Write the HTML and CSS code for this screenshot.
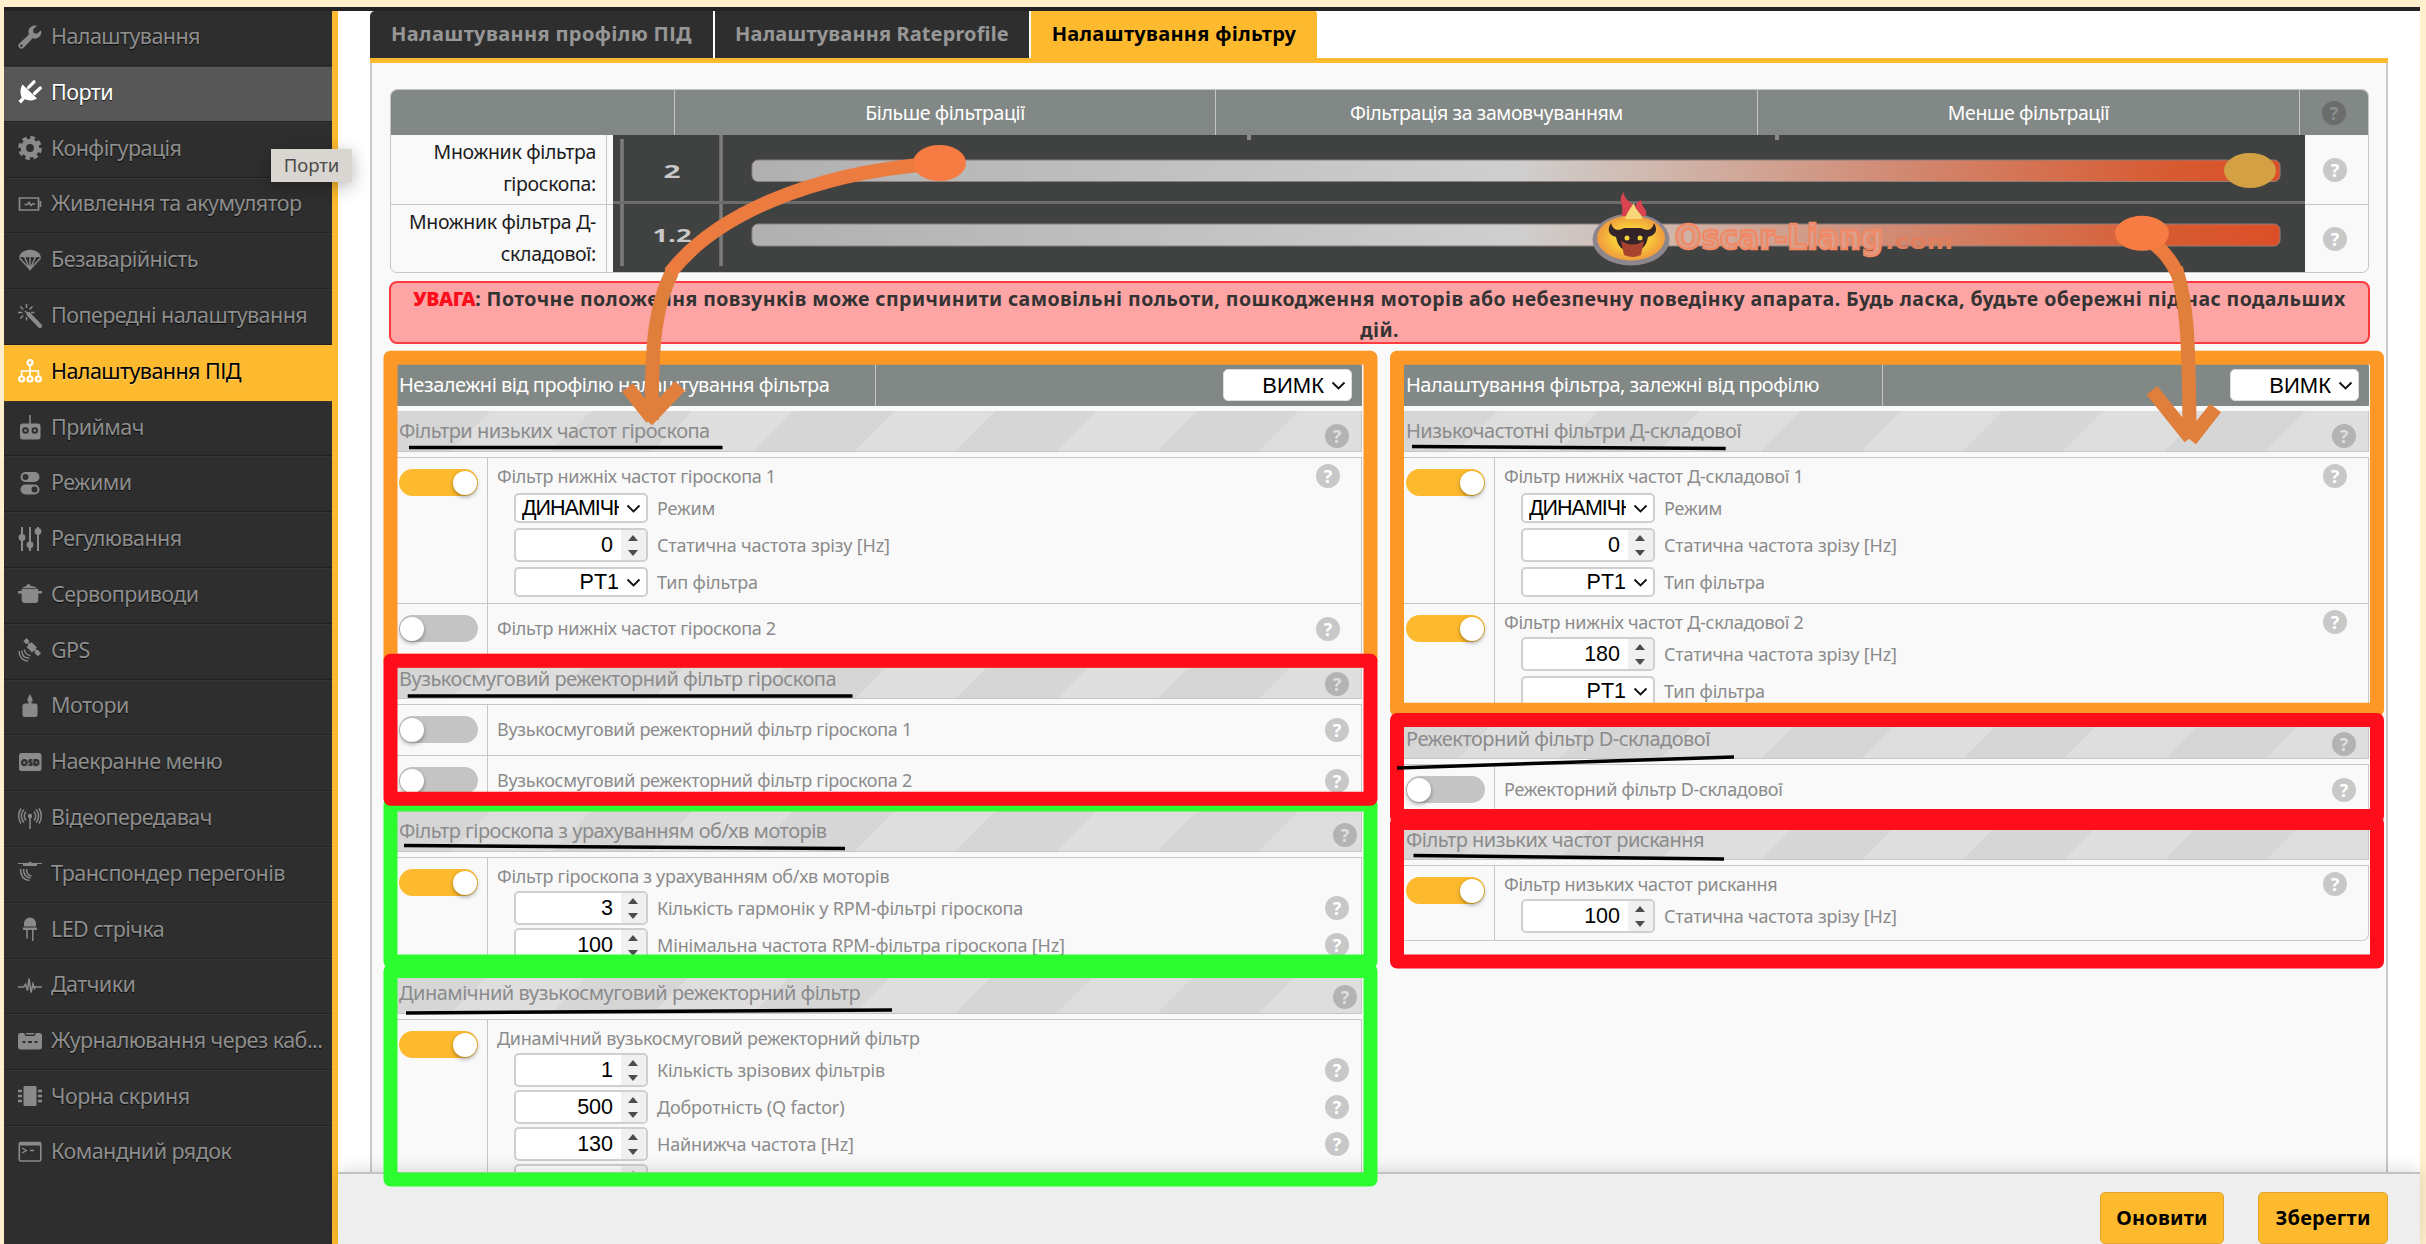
FILE: index.html
```html
<!DOCTYPE html>
<html lang="uk">
<head>
<meta charset="utf-8">
<title>Налаштування фільтру</title>
<link rel="stylesheet" href="styles.css">
</head>
<body>
<div class="window">
  <nav class="sidebar">
    <a class="item"><svg viewBox="0 0 24 24"><path d="M23 5.200l-4 3.600-3.400-.800L15 4.600l4-3.800a6.500 6.500 0 0 0-8 8.700L1.300 18.500a3 3 0 1 0 4.300 4.200l9-9.500a6.500 6.500 0 0 0 8.400-8zM3.400 21.900a1.200 1.200 0 1 1 0-2.400 1.200 1.200 0 0 1 0 2.400z" fill-rule="evenodd"/></svg><span>Налаштування</span></a>
    <a class="item hover"><svg viewBox="0 0 24 24"><path d="M4.500 4.500l14.500 14c-4 2.400-8.500 2.600-12 .5L3 23.500 .5 21l3.300-3.500C2 13.500 2 8.500 4.500 4.500z"/><path d="M10.500 7.500L16 1.800M16.500 13.500L22.300 8" fill="none" stroke="currentColor" stroke-width="3.200" stroke-linecap="round"/></svg><span>Порти</span></a>
    <a class="item"><svg viewBox="0 0 24 24"><circle cx="12" cy="12" r="6.600" fill="none" stroke="currentColor" stroke-width="5.400"/><circle cx="12" cy="12" r="9.900" fill="none" stroke="currentColor" stroke-width="4" stroke-dasharray="4.400 3.375"/></svg><span>Конфігурація</span></a>
    <a class="item"><svg viewBox="0 0 24 24"><path d="M1.500 6h19v12h-19zM22.500 9v6M6.500 12.500h3l1.500-2 2 3 1.500-1.500h2.500" fill="none" stroke="currentColor" stroke-width="1.700"/></svg><span>Живлення та акумулятор</span></a>
    <a class="item"><svg viewBox="0 0 24 24"><path d="M1 10C2 -1 22 -1 23 10c-2-1.500-4-1.500-5.500 0-2-1.500-9-1.500-11 0C5 8.500 3 8.500 1 10z"/><path d="M1.500 10L12 21.500 22.500 10M7 10l5 11.500L17 10M12 9v12" fill="none" stroke="currentColor" stroke-width="1.400"/></svg><span>Безаварійність</span></a>
    <a class="item"><svg viewBox="0 0 24 24"><path d="M10.500 10L22 22" fill="none" stroke="currentColor" stroke-width="4.200" stroke-linecap="round"/><path d="M7 7l2 2M8.500 0v4M0 8.500h4.500M2.300 2.500l3 3M14.500 2.500l-3 3M2.300 14.500l3-3M8.500 13v3.500M13 8.500h3.500" fill="none" stroke="currentColor" stroke-width="1.500"/></svg><span>Попередні налаштування</span></a>
    <a class="item active"><svg viewBox="0 0 24 24"><path d="M12 6v11M3.600 17.500v-5.500h16.800v5.500" fill="none" stroke="currentColor" stroke-width="1.600"/><g fill="#fdba2e" stroke="currentColor" stroke-width="2.200"><circle cx="12" cy="3.600" r="2.500"/><circle cx="3.600" cy="20" r="2.500"/><circle cx="12" cy="20" r="2.500"/><circle cx="20.400" cy="20" r="2.500"/></g></svg><span>Налаштування ПІД</span></a>
    <a class="item"><svg viewBox="0 0 24 24"><rect x="2" y="8.500" width="20.500" height="16" rx="2.500"/><path d="M12 0v9" stroke="currentColor" stroke-width="1.600"/><g fill="#8a8a8a" stroke="#2e2e2e" stroke-width="1.900"><circle cx="7.500" cy="15.500" r="2.300"/><circle cx="16.800" cy="15.500" r="2.300"/></g></svg><span>Приймач</span></a>
    <a class="item"><svg viewBox="0 0 24 24"><rect x="2.500" y="1" width="19" height="10" rx="5"/><rect x="2.500" y="13.500" width="19" height="10" rx="5"/><circle cx="7.500" cy="6" r="3" fill="#2e2e2e"/><circle cx="16.500" cy="18.500" r="3" fill="#2e2e2e"/></svg><span>Режими</span></a>
    <a class="item"><svg viewBox="0 0 24 24"><path d="M4 0v24M12 0v24M20 0v24" stroke="currentColor" stroke-width="2"/><circle cx="4" cy="10.500" r="3.400"/><circle cx="12" cy="17.800" r="3.400"/><circle cx="20" cy="4.500" r="3.400"/></svg><span>Регулювання</span></a>
    <a class="item"><svg viewBox="0 0 24 24"><path d="M4 6.200C5 4.800 7 4.100 8.500 3.900L9 2.300h2.800l.7 1.600c2.500.3 6 1 7 2.300z"/><path d="M3.700 7h16.600v2h3.700v2.400h-3.700V18c0 2-1 3-3 3H6.700c-2 0-3-1-3-3v-6.600H0V9h3.700z"/></svg><span>Сервоприводи</span></a>
    <a class="item"><svg viewBox="0 0 24 24"><path d="M8.500 0L11.500 3l-3.200 3.200-3-3zM19.500 11.500l3.500 3.700-3.200 3-3.500-3.500zM13.500 4l5.500 5.500-5 5L8.500 9z"/><path d="M10 5l9 9" stroke="currentColor" stroke-width="2"/><path d="M6.500 11.500c0 3 2.500 6 6 6M3.800 12.500c0 5 3.500 7.500 7.500 7.800M1 13c0 6 4 10 9 10" fill="none" stroke="currentColor" stroke-width="1.400"/></svg><span>GPS</span></a>
    <a class="item"><svg viewBox="0 0 24 24"><rect x="4.500" y="9.500" width="15" height="13.500" rx="2.500"/><path d="M12 0l2.500 5v2.500h-1V10h-3V7.500h-1V5z"/></svg><span>Мотори</span></a>
    <a class="item"><svg viewBox="0 0 24 24"><rect x="1" y="3" width="22.500" height="18" rx="2.500"/><text x="12.200" y="15.300" font-size="9" font-weight="700" text-anchor="middle" fill="#2e2e2e">OSD</text></svg><span>Наекранне меню</span></a>
    <a class="item"><svg viewBox="0 0 24 24"><circle cx="12" cy="10" r="2.200"/><path d="M12 10v13M8 5.800a6 6 0 0 0 0 8.400M16 5.800a6 6 0 0 1 0 8.400M6 3.500c-3.500 3.500-3.500 9.500 0 13M18 3.500c3.500 3.500 3.500 9.500 0 13M3 2.500c-3 4-3 11 0 15M21 2.500c3 4 3 11 0 15" fill="none" stroke="currentColor" stroke-width="1.500"/></svg><span>Відеопередавач</span></a>
    <a class="item"><svg viewBox="0 0 24 24"><path d="M0 2h10l2-1.500L14 2h10v1h-5v2H5V3H0z"/><path d="M8.500 8c0 4 1.500 6.500 5 7M5.500 8c0 5.500 2.500 8.500 7 9M2.500 8c0 7 3.500 11 9 11.500" fill="none" stroke="currentColor" stroke-width="1.500"/></svg><span>Транспондер перегонів</span></a>
    <a class="item"><svg viewBox="0 0 24 24"><path d="M6 9.500V6.500a6 6 0 0 1 12 0v3zM5 10.500h14v2.500H5z"/><path d="M9 13v8.500M14.800 13v11" stroke="currentColor" stroke-width="1.500"/></svg><span>LED стрічка</span></a>
    <a class="item"><svg viewBox="0 0 24 24"><path d="M0 14h5.500l2-2.500 2 6L11 5.500l2 14L15 11l1.500 4.500 1-1.500H24" fill="none" stroke="currentColor" stroke-width="1.600"/></svg><span>Датчики</span></a>
    <a class="item"><svg viewBox="0 0 24 24"><path d="M2.500 4H6l1.500 3h9L18 4h3.500c1.500 0 2.500 1 2.500 2.500V18c0 1.500-1 2.500-2.500 2.500h-19C1 20.500 0 19.500 0 18V6.500C0 5 1 4 2.500 4z"/><path d="M7.500 4h9l-1 1.500h-7z"/><path d="M4.500 13h3M10 13h4M16.500 13h3" stroke="#2e2e2e" stroke-width="2"/></svg><span>Журналювання через каб...</span></a>
    <a class="item"><svg viewBox="0 0 24 24"><rect x="5.500" y="2" width="13" height="20" rx="1"/><path d="M0 7h4M0 12h4M0 17h4M20 7h4M20 12h4M20 17h4" stroke="currentColor" stroke-width="2.400"/></svg><span>Чорна скриня</span></a>
    <a class="item"><svg viewBox="0 0 24 24"><rect x="1.300" y="2.500" width="21.500" height="18.500" rx="1.500" fill="none" stroke="currentColor" stroke-width="1.600"/><path d="M1 2h22v3.500H1z"/><path d="M4 8l4.500 2.500L4 13M12 10.500h4" fill="none" stroke="currentColor" stroke-width="1.300"/></svg><span>Командний рядок</span></a>
  </nav>

  <main class="main">
    <div class="content">
      <div class="tabs">
        <a class="tab t1">Налаштування профілю ПІД</a>
        <a class="tab t2">Налаштування Rateprofile</a>
        <a class="tab t3">Налаштування фільтру</a>
      </div>
      <div class="panel">
        <div class="sliders">
          <div class="shead"><div></div><div>Більше фільтрації</div><div>Фільтрація за замовчуванням</div><div>Менше фільтрації</div><div><i class="help dark">?</i></div></div>
          <div class="srow"><div class="slabel">Множник фільтра<br>гіроскопа:</div><i class="help">?</i></div>
          <div class="srow"><div class="slabel">Множник фільтра Д-<br>складової:</div><i class="help">?</i></div>
          <svg class="strip" viewBox="613 135 1692 138">
            <defs>
              <linearGradient id="g1"><stop offset="0" stop-color="#b0b0b0"/><stop offset=".5" stop-color="#cfcfcf"/><stop offset=".6" stop-color="#d0b5aa"/><stop offset=".74" stop-color="#d18c76"/><stop offset=".93" stop-color="#d75a31"/><stop offset="1" stop-color="#dc4f28"/></linearGradient>
              <radialGradient id="g2"><stop offset=".3" stop-color="#fbe03a"/><stop offset="1" stop-color="#f09a3c"/></radialGradient>
            </defs>
            <rect x="613" y="135" width="1692" height="138" fill="#404241"/>
            <path d="M622 139v127M721 135v131" stroke="#7c7c7c" stroke-width="3.500"/>
            <path d="M1249 135v5M1777 135v5" stroke="#8a8a8a" stroke-width="4"/>
            <path d="M613 202.500h1692" stroke="#6b6c6b" stroke-width="3"/>
            <g class="mult"><text x="672" y="178" textLength="17" lengthAdjust="spacingAndGlyphs">2</text><text x="672" y="242" textLength="39" lengthAdjust="spacingAndGlyphs">1.2</text></g>
            <rect x="752" y="160" width="1528" height="21.500" rx="6" fill="url(#g1)" stroke="#8e7f7a" stroke-width="1"/>
            <rect x="752" y="224" width="1528" height="22" rx="6" fill="url(#g1)" stroke="#8e7f7a" stroke-width="1"/>
            <ellipse cx="2250" cy="170.500" rx="26" ry="17.500" fill="#d3a144"/>
            <ellipse cx="1631" cy="239.500" rx="38.500" ry="26" fill="#8d868c"/>
            <ellipse cx="1631" cy="238" rx="34" ry="22.500" fill="url(#g2)"/>
            <path d="M1624 192c-8 9 2 14-3 24h25c2-7-5-9-5-16-4 2-5 4-6 8-2-6-12-8-11-16z" fill="#d9434f"/>
            <path d="M1634 203c-4 6-7 9-9 16h17c1-5-7-8-8-16z" fill="#f7d777"/>
            <path d="M1611 223c2 8 8 8 13 5h17c6 3 11 3 13-5 4 7 2 12-6 14-2 10-6 14-16 14s-14-4-16-14c-8-2-9-8-5-14z" fill="#33242a"/>
            <path d="M1621 241q12 7 23 0l-3 14q-8 4-17 0z" fill="#a8432f"/>
            <circle cx="1627" cy="238" r="2.500" fill="#f3d335"/><circle cx="1640" cy="238" r="2.500" fill="#f3d335"/>
            <g class="brand"><text x="1675" y="249" textLength="208" lengthAdjust="spacingAndGlyphs">Oscar-Liang</text><text class="com" x="1885" y="249" textLength="68" lengthAdjust="spacingAndGlyphs">.com</text></g>
          </svg>
        </div>
        <div class="alert"><p><b>УВАГА</b>: Поточне положення повзунків може спричинити самовільні польоти, пошкодження моторів або небезпечну поведінку апарата. Будь ласка, будьте обережні під час подальших</p><p>дій.</p></div>

        <div class="columns">
          <section class="col">
            <header class="chead"><h2>Незалежні від профілю налаштування фільтра</h2><div class="sel big"><span>ВИМК</span><svg viewBox="0 0 14 9"><path d="M1 1.500l6 6 6-6"/></svg></div></header>
            <h3 class="stripe">Фільтри низьких частот гіроскопа<i class="help mid">?</i></h3>
            <div class="rows">
              <div class="row h146"><div class="tg"><i class="toggle on"></i></div><div class="body">
                <div class="title">Фільтр нижніх частот гіроскопа 1<i class="help r1">?</i></div>
                <div class="line"><div class="sel"><span class="clip">ДИНАМІЧН</span><svg viewBox="0 0 14 9"><path d="M1 1.500l6 6 6-6"/></svg></div>Режим</div>
                <div class="line"><div class="num"><span>0</span><i></i></div>Статична частота зрізу [Hz]</div>
                <div class="line"><div class="sel"><span>PT1</span><svg viewBox="0 0 14 9"><path d="M1 1.500l6 6 6-6"/></svg></div>Тип фільтра</div>
              </div></div>
              <div class="row h51"><div class="tg"><i class="toggle"></i></div><div class="body single">Фільтр нижніх частот гіроскопа 2<i class="help r1">?</i></div></div>
            </div>
            <h3 class="stripe">Вузькосмуговий режекторний фільтр гіроскопа<i class="help mid">?</i></h3>
            <div class="rows">
              <div class="row h51"><div class="tg"><i class="toggle"></i></div><div class="body single">Вузькосмуговий режекторний фільтр гіроскопа 1<i class="help">?</i></div></div>
              <div class="row h51"><div class="tg"><i class="toggle"></i></div><div class="body single">Вузькосмуговий режекторний фільтр гіроскопа 2<i class="help">?</i></div></div>
            </div>
            <h3 class="stripe far">Фільтр гіроскопа з урахуванням об/хв моторів<i class="help mid">?</i></h3>
            <div class="rows">
              <div class="row h111"><div class="tg"><i class="toggle on"></i></div><div class="body">
                <div class="title">Фільтр гіроскопа з урахуванням об/хв моторів</div>
                <div class="line"><div class="num"><span>3</span><i></i></div>Кількість гармонік у RPM-фільтрі гіроскопа<i class="help">?</i></div>
                <div class="line"><div class="num"><span>100</span><i></i></div>Мінімальна частота RPM-фільтра гіроскопа [Hz]<i class="help">?</i></div>
              </div></div>
            </div>
            <h3 class="stripe far">Динамічний вузькосмуговий режекторний фільтр<i class="help mid">?</i></h3>
            <div class="rows">
              <div class="row h183"><div class="tg"><i class="toggle on"></i></div><div class="body">
                <div class="title">Динамічний вузькосмуговий режекторний фільтр</div>
                <div class="line"><div class="num"><span>1</span><i></i></div>Кількість зрізових фільтрів<i class="help">?</i></div>
                <div class="line"><div class="num"><span>500</span><i></i></div>Добротність (Q factor)<i class="help">?</i></div>
                <div class="line"><div class="num"><span>130</span><i></i></div>Найнижча частота [Hz]<i class="help">?</i></div>
                <div class="line"><div class="num"><span></span><i></i></div></div>
              </div></div>
            </div>
          </section>

          <section class="col">
            <header class="chead"><h2>Налаштування фільтра, залежні від профілю</h2><div class="sel big"><span>ВИМК</span><svg viewBox="0 0 14 9"><path d="M1 1.500l6 6 6-6"/></svg></div></header>
            <h3 class="stripe">Низькочастотні фільтри Д-складової<i class="help mid">?</i></h3>
            <div class="rows">
              <div class="row h146"><div class="tg"><i class="toggle on"></i></div><div class="body">
                <div class="title">Фільтр нижніх частот Д-складової 1<i class="help r1">?</i></div>
                <div class="line"><div class="sel"><span class="clip">ДИНАМІЧН</span><svg viewBox="0 0 14 9"><path d="M1 1.500l6 6 6-6"/></svg></div>Режим</div>
                <div class="line"><div class="num"><span>0</span><i></i></div>Статична частота зрізу [Hz]</div>
                <div class="line"><div class="sel"><span>PT1</span><svg viewBox="0 0 14 9"><path d="M1 1.500l6 6 6-6"/></svg></div>Тип фільтра</div>
              </div></div>
              <div class="row h111"><div class="tg"><i class="toggle on"></i></div><div class="body">
                <div class="title">Фільтр нижніх частот Д-складової 2<i class="help r1">?</i></div>
                <div class="line"><div class="num"><span>180</span><i></i></div>Статична частота зрізу [Hz]</div>
                <div class="line"><div class="sel"><span>PT1</span><svg viewBox="0 0 14 9"><path d="M1 1.500l6 6 6-6"/></svg></div>Тип фільтра</div>
              </div></div>
            </div>
            <h3 class="stripe">Режекторний фільтр D-складової<i class="help mid">?</i></h3>
            <div class="rows">
              <div class="row h51"><div class="tg"><i class="toggle"></i></div><div class="body single">Режекторний фільтр D-складової<i class="help">?</i></div></div>
            </div>
            <h3 class="stripe">Фільтр низьких частот рискання</h3>
            <div class="rows last">
              <div class="row h75"><div class="tg"><i class="toggle on"></i></div><div class="body">
                <div class="title">Фільтр низьких частот рискання<i class="help r1">?</i></div>
                <div class="line"><div class="num"><span>100</span><i></i></div>Статична частота зрізу [Hz]</div>
              </div></div>
            </div>
          </section>
        </div>
      </div>
    </div>
    <footer class="footer"><button class="b1">Оновити</button><button class="b2">Зберегти</button></footer>
  </main>
</div>

<div class="tooltip">Порти</div>

<svg class="notes" viewBox="0 0 2426 1244">
  <g fill="none" stroke-width="14" stroke-linejoin="round">
    <rect x="390.500" y="357.700" width="980" height="303" stroke="#fd9827"/>
    <rect x="1397" y="357.700" width="980" height="352" stroke="#fd9827"/>
    <rect x="390.500" y="804.500" width="980" height="157" stroke="#2bfd2e"/>
    <rect x="390.500" y="971" width="980" height="208.500" stroke="#2bfd2e"/>
    <rect x="390.500" y="660.700" width="980" height="138" stroke="#fe0d1b"/>
    <rect x="1397" y="720" width="980" height="96" stroke="#fe0d1b"/>
    <rect x="1397" y="823" width="980" height="138.500" stroke="#fe0d1b"/>
  </g>
  <g fill="none" stroke="#000" stroke-width="3.500">
    <path d="M409 447.600H722.500M407.700 696H852.500M404 845.500L845 848.500M406 1013L892 1010M1412 446.500L1725.700 448.500M1397 768L1734 757M1413.500 855.500L1724 859"/>
  </g>
  <g fill="none" stroke="#e07e3c" stroke-width="14">
    <path d="M672 272C656 304 651 340 652 420M627.500 387.500L652 418.500M680 386L647 420.500"/>
    <path d="M2176 268C2186 300 2189 330 2189.500 434M2152 390.500L2190 438M2215.500 408L2190.500 440"/>
  </g>
  <g fill="none" stroke="#ec7b40" stroke-width="14">
    <path d="M930 164C810 174 715 215 670 273"/>
    <path d="M2148 240Q2166 250 2177 273"/>
  </g>
  <g fill="#f67c43"><ellipse cx="939.500" cy="163" rx="26.500" ry="18"/><ellipse cx="2142" cy="233.300" rx="27" ry="17.500"/></g>
</svg>
</body>
</html>
```
FILE: styles.css
```css
* { box-sizing: border-box; }
body { margin: 0; width: 2426px; height: 1244px; overflow: hidden; position: relative; background: #ffefcd; font-family: "Noto Sans", "Open Sans", sans-serif; }
i { font-style: normal; }
h2, h3 { margin: 0; font-weight: 400; }
p { margin: 0; }
.window { margin: 7px 6px 0 4px; height: 1237px; border-top: 4px solid #232323; background: #fff; display: flex; }

.sidebar { width: 334px; flex: none; background: #2e2e2e; border-right: 6px solid #fdba2e; }
.item { display: flex; align-items: center; height: 55.790px; padding: 0 0 3px 14px; border-top: 1px solid #363636; border-bottom: 1.500px solid #222; color: #8e8e8e; font-size: 21.500px; letter-spacing: -.55px; text-shadow: 0 1px 1px rgba(0,0,0,.8); white-space: nowrap; }
.item:first-child { height: 55px; border-top: 0; }
.item:last-child { border-bottom: 0; padding-bottom: 5px; }
.item svg { width: 24px; height: 24px; flex: none; margin-right: 9px; fill: #8a8a8a; color: #8a8a8a; overflow: visible; letter-spacing: 0; }
.item span { margin-top: -2px; }
.item.hover { background: #575757; color: #fff; }
.item.hover svg, .item.active svg { fill: #fff; color: #fff; }
.item.active { background: #fdba2e; color: #000; border-color: #fdba2e; margin-right: -6px; text-shadow: 0 1px 1px rgba(255,255,255,.4); }

.main { flex: 1; display: flex; flex-direction: column; min-width: 0; }
.content { flex: none; height: 1161px; overflow: hidden; padding: 0 32px; }
.tabs { height: 52px; border-bottom: 5px solid #fdba2e; display: flex; gap: 2px; }
.tab { height: 47px; background: #2e2e2e; color: #979797; font-weight: 700; font-size: 20px; line-height: 45px; text-align: center; white-space: nowrap; }
.t1 { width: 343px; border-top-left-radius: 5px; letter-spacing: .37px; }
.t2 { width: 314px; letter-spacing: .13px; }
.t3 { width: 286px; background: #fdba2e; color: #000; border-top-right-radius: 3px; letter-spacing: .3px; }
.panel { height: 1140px; border: solid #c9c9c9; border-width: 0 2px; background: #f9f9f9; padding: 26px 16px 0 18px; }

.sliders { position: relative; width: 1979px; height: 184px; border: 1.500px solid #c6c6c6; border-radius: 7px; overflow: hidden; }
.shead { display: grid; grid-template-columns: 284px 541px 542px 542px 1fr; height: 45px; background: #828885; color: #fff; font-size: 19.500px; letter-spacing: -.4px; line-height: 44px; text-align: center; }
.shead > div { border-right: 1.500px solid #c6c6c6; display: flex; align-items: center; justify-content: center; }
.shead > div:last-child { border: 0; }
.srow { height: 69px; display: flex; justify-content: space-between; align-items: center; padding-right: 21px; }
.srow + .srow { border-top: 1.500px solid #c6c6c6; }
.slabel { width: 216px; height: 100%; border-right: 1.500px solid #c6c6c6; padding: 1px 10px 0 0; text-align: right; font-size: 19.500px; letter-spacing: -.32px; line-height: 32.400px; color: #1c1c1c; white-space: nowrap; }
.strip { position: absolute; left: 222px; top: 45px; width: 1692px; height: 138px; }
.mult { font: 700 18.500px "Open Sans", sans-serif; fill: #c8c8c8; text-anchor: middle; }
.brand { font: 700 33px "DejaVu Sans", sans-serif; fill: #d9a08c; stroke: #f08a66; stroke-width: 2.500px; }
.brand .com { font-size: 22px; stroke: none; fill: #e07f5d; }

.help { display: inline-block; flex: none; width: 24px; height: 24px; border-radius: 50%; background: #c8c8c8; color: #fff; font: 700 18px/24px "Open Sans", sans-serif; text-align: center; letter-spacing: 0; }
.help.dark { background: #6b6d6c; color: #8d918f; }
.help.mid { background: #b3b3b3; color: #dedede; }

.alert { width: 1981px; margin: 8px 0 0 -1px; height: 63px; border: 2px solid #fd3b40; border-radius: 8px; background: #fda4a4; color: #333; font-weight: 700; font-size: 19.500px; letter-spacing: .42px; line-height: 31px; text-align: center; white-space: nowrap; }
.alert b { color: #fb0d1b; letter-spacing: -.4px; }

.columns { display: flex; gap: 34px; margin-top: 17px; margin-left: -1px; }
.col { width: 973px; flex: none; }
.chead { height: 45px; background: #828885; color: #fff; display: flex; align-items: center; justify-content: space-between; padding-right: 10px; border-radius: 6px 6px 0 0; }
.chead h2 { width: 487px; height: 45px; border-right: 1.500px solid #c6c6c6; padding-left: 10px; font-size: 20px; letter-spacing: -.49px; line-height: 47px; white-space: nowrap; }
.stripe { margin-top: 5px; height: 40px; border: 1.500px solid #c6c6c6; border-top: 0; padding: 0 12px 1px 9px; display: flex; justify-content: space-between; align-items: center; font-size: 20px; letter-spacing: -.51px; color: #8b8b8b; white-space: nowrap; background: repeating-linear-gradient(135deg, #d6d6d6 0 71.400px, #dedede 71.400px 142.800px); }
.chead + .stripe { height: 41px; }
.stripe .help { margin-top: 11px; }
.far { padding-right: 4px; height: 41px; }
.far .help { margin-top: 8px; }
.rows { margin-top: 5px; border: solid #c9c9c9; border-width: 0 1.500px; }
.rows.last { border-bottom-width: 1.500px; border-radius: 0 0 7px 7px; }
.row { display: flex; border-top: 1.500px solid #c6c6c6; }
.h146 { height: 146px; } .h51 { height: 51px; } .h111 { height: 111px; } .h75 { height: 75px; } .h183 { height: 183px; }
.tg { width: 98px; flex: none; border-right: 1.500px solid #c6c6c6; padding: 11px 0 0 9px; }
.toggle { display: block; position: relative; width: 79px; height: 27px; border-radius: 14px; background: #c4c4c4; }
.toggle::after { content: ""; position: absolute; left: 1px; top: 1.500px; width: 24px; height: 24px; border-radius: 50%; background: #fff; box-shadow: 0 2px 4px rgba(0,0,0,.35); }
.toggle.on { background: #fdba2e; }
.toggle.on::after { left: 53.500px; }
.body { flex: 1; padding: 0 12px 0 9px; font-size: 18px; letter-spacing: -.17px; color: #8b8b8b; white-space: nowrap; }
.single { display: flex; justify-content: space-between; align-items: center; padding-bottom: 2px; letter-spacing: -.29px; }
.single .help { margin-top: 1px; }
.title { height: 31.500px; padding-top: 5px; display: flex; justify-content: space-between; align-items: center; letter-spacing: -.29px; }
.title .r1, .single .r1 { margin-right: 9px; }
.line { height: 37px; display: flex; align-items: center; padding-left: 17px; }
.line .help { margin-left: auto; }
.sel, .num { width: 134px; flex: none; margin-right: 9px; height: 30px; border: 2px solid #cfcfcf; border-radius: 5px; background: #fff; color: #000; font: 21.500px/25px "Liberation Sans", Arial, sans-serif; display: flex; align-items: center; justify-content: flex-end; letter-spacing: 0; }
.sel span { overflow: hidden; }
.sel .clip { width: 97px; letter-spacing: -1px; }
.sel svg { width: 15px; height: 9px; margin: 0 5px 0 7px; fill: none; stroke: #111; stroke-width: 1.900; flex: none; }
.num { height: 34px; line-height: 30px; }
.num span { padding-right: 8px; }
.num i { position: relative; width: 25px; height: 30px; background: #f0f0f0; border-radius: 0 4px 4px 0; }
.num i::before, .num i::after { content: ""; position: absolute; left: 7px; border: solid transparent; border-width: 0 5.500px; }
.num i::before { top: 5px; border-bottom: 6px solid #4c4c4c; }
.num i::after { bottom: 4px; border-top: 6px solid #4c4c4c; }
.sel.big { width: 129px; height: 32px; margin: 3px 0 0; border: 1px solid #ddd; font-size: 22px; }

.footer { position: relative; height: 72px; border-top: 2px solid #c3c3c3; background: #eee; box-shadow: 0 -2px 16px rgba(0,0,0,.14); display: flex; justify-content: flex-end; align-items: flex-start; gap: 34px; padding: 18px 32px 0 0; }
.footer button { height: 52px; border: 1.500px solid #dfa52c; border-radius: 5px; background: #fdba2e; padding: 0 0 2px; font: 700 20px "Noto Sans", sans-serif; letter-spacing: .22px; color: #000; }
.b1 { width: 124px; } .b2 { width: 130px; }

.tooltip { position: absolute; left: 271px; top: 149px; width: 81px; height: 33px; background: #d9d5d0; color: #4b4b4b; font-size: 18.500px; line-height: 31px; text-align: center; box-shadow: 0 4px 18px rgba(0,0,0,.3); }
.notes { position: absolute; left: 0; top: 0; width: 2426px; height: 1244px; }
```
